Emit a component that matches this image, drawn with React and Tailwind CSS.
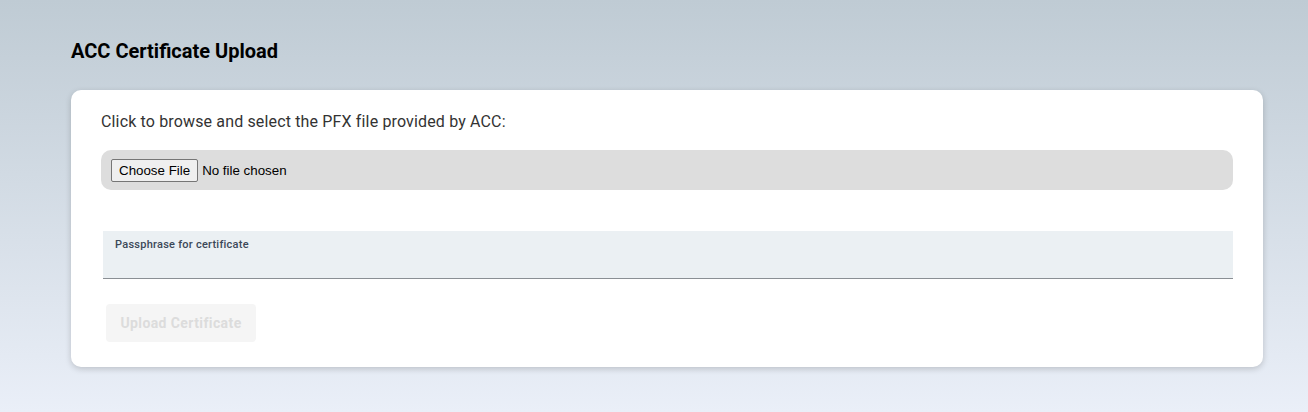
import React from "react";

export default function App() {
  return (
    <div
      className="min-h-[412px] w-full bg-gradient-to-b from-[#bfcbd4] to-[#eaeff8] pl-[71px] pr-[45px] pt-[39px] pb-[45px]"
      style={{ fontFamily: "Roboto, 'Liberation Sans', sans-serif" }}
    >
      <h2 className="text-[20px] leading-[24px] font-bold text-black mb-[27px]">
        ACC Certificate Upload
      </h2>
      <div className="bg-white rounded-[10px] shadow-[0_2px_6px_rgba(0,0,0,0.18)] px-[30px] pt-[20px] pb-[25px]">
        <p className="text-[16px] leading-[24px] tracking-[0.15px] text-[#333333]">
          Click to browse and select the PFX file provided by ACC:
        </p>
        <div className="mt-[16px] h-[40px] bg-[#dddddd] rounded-[10px] flex items-center px-[10px] pt-[1px]">
          <input
            type="file"
            className="text-[13.33px] text-black file:mr-[4px] file:border file:border-solid file:border-[#767676] file:bg-[#efefef] file:rounded-[2px] file:px-[7px] file:py-[1px] file:text-black"
            style={{ fontFamily: "'Liberation Sans', Arial, sans-serif" }}
          />
        </div>
        <div className="mt-[41px] ml-[2px] h-[48px] bg-[#ebf0f3] border-b border-[#8a8f94] px-[12px] pt-[7px]">
          <label className="block text-[11px] leading-[14px] font-medium tracking-[0.25px] text-[#3c4858]">
            Passphrase for certificate
          </label>
          <input
            type="password"
            className="w-full bg-transparent outline-none text-[14px] h-[20px]"
          />
        </div>
        <button
          disabled
          className="mt-[25px] ml-[5px] w-[150px] h-[38px] bg-[#f5f5f5] rounded-[4px] text-[14px] font-bold tracking-[0.4px] text-[#dcdcdc]"
        >
          Upload Certificate
        </button>
      </div>
    </div>
  );
}
